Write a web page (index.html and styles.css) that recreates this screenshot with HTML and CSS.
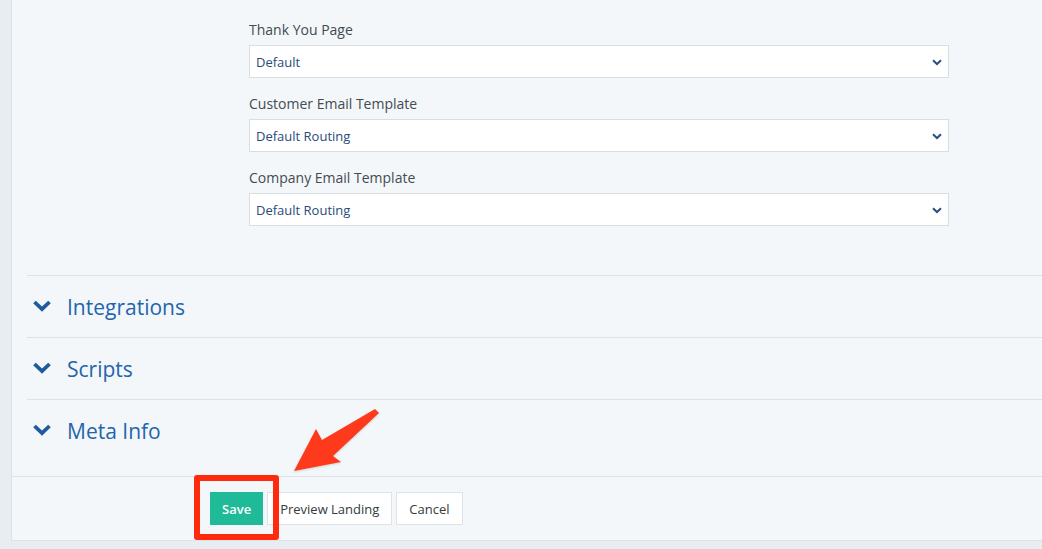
FILE: index.html
```html
<!DOCTYPE html>
<html lang="en">
<head>
  <meta charset="UTF-8">
  <meta name="viewport" content="width=device-width, initial-scale=1.0">
  <link rel="stylesheet" href="styles.css">
  <title>Landing Settings</title>
</head>
<body>
  <div class="panel">
    <div class="form-fields">
      <label class="field-label">Thank You Page</label>
      <div class="select-box">
        <span>Default</span>
        <svg class="select-caret" viewBox="0 0 10 7" width="10" height="7"><path d="M1 1.2 L5 5 L9 1.2" fill="none" stroke="#2c4f7c" stroke-width="2"/></svg>
      </div>

      <label class="field-label">Customer Email Template</label>
      <div class="select-box">
        <span>Default Routing</span>
        <svg class="select-caret" viewBox="0 0 10 7" width="10" height="7"><path d="M1 1.2 L5 5 L9 1.2" fill="none" stroke="#2c4f7c" stroke-width="2"/></svg>
      </div>

      <label class="field-label">Company Email Template</label>
      <div class="select-box">
        <span>Default Routing</span>
        <svg class="select-caret" viewBox="0 0 10 7" width="10" height="7"><path d="M1 1.2 L5 5 L9 1.2" fill="none" stroke="#2c4f7c" stroke-width="2"/></svg>
      </div>
    </div>

    <div class="sections">
      <div class="section-row">
        <svg class="section-chevron" viewBox="0 0 18 12" width="18" height="12"><path d="M1.5 2 L9 9.2 L16.5 2" fill="none" stroke="#1e5c9e" stroke-width="3.8"/></svg>
        <span>Integrations</span>
      </div>
      <div class="section-row">
        <svg class="section-chevron" viewBox="0 0 18 12" width="18" height="12"><path d="M1.5 2 L9 9.2 L16.5 2" fill="none" stroke="#1e5c9e" stroke-width="3.8"/></svg>
        <span>Scripts</span>
      </div>
      <div class="section-row">
        <svg class="section-chevron" viewBox="0 0 18 12" width="18" height="12"><path d="M1.5 2 L9 9.2 L16.5 2" fill="none" stroke="#1e5c9e" stroke-width="3.8"/></svg>
        <span>Meta Info</span>
      </div>
    </div>

    <div class="form-actions">
      <button class="btn btn-save">Save</button>
      <button class="btn">Preview Landing</button>
      <button class="btn">Cancel</button>
    </div>
  </div>

  <!-- annotation drawn over the screenshot -->
  <div class="highlight-box"></div>
  <svg class="pointer-arrow" width="1042" height="549" viewBox="0 0 1042 549">
    <polygon points="375,409 379,413 333,456 341,462 294,471 316,429 322,440" fill="#ff3a1c"/>
  </svg>
</body>
</html>
```

FILE: styles.css
```css
body {
  margin: 0;
  background-color: #e8edf2;
  font-family: 'Open Sans', 'Noto Sans', sans-serif;
  height: 549px;
  overflow: hidden;
  position: relative;
}

.panel {
  margin-left: 11px;
  height: 540px;
  background-color: #f3f7fa;
  border-left: 1px solid #dce2e8;
  border-bottom: 1px solid #dce2e8;
  display: flex;
  flex-direction: column;
}

.form-fields {
  display: flex;
  flex-direction: column;
  width: 700px;
  margin-left: 237px;
  padding-top: 20px;
  height: 275px;
  box-sizing: border-box;
  flex-shrink: 0;
}

.field-label {
  font-size: 14px;
  line-height: 20px;
  color: #444b52;
  margin-bottom: 5px;
}

.select-box {
  display: flex;
  align-items: center;
  justify-content: space-between;
  height: 33px;
  box-sizing: border-box;
  padding: 0 6px 0 6px;
  background-color: #ffffff;
  border: 1px solid #d9dee3;
  font-size: 13px;
  color: #2a4b78;
  margin-bottom: 16px;
}

.select-caret {
  margin-top: 1px;
}

.sections {
  margin-left: 15px;
  padding-bottom: 15px;
  flex-shrink: 0;
}

.section-row {
  display: flex;
  align-items: center;
  height: 61px;
  border-top: 1px solid #dce2e8;
  font-size: 21px;
  color: #2365ab;
}

.section-chevron {
  margin-left: 6px;
  margin-right: 16px;
  margin-top: -2px;
}

.form-actions {
  border-top: 1px solid #dce2e8;
  flex: 1;
  display: flex;
  align-items: flex-start;
  gap: 4px;
  padding-top: 15px;
  padding-left: 198px;
}

.btn {
  height: 33px;
  padding: 0 12px;
  background-color: #ffffff;
  border: 1px solid #dfe3e7;
  border-radius: 0;
  font-family: inherit;
  font-size: 13px;
  color: #333a40;
}

.btn-save {
  background-color: #1fba98;
  border-color: #1fba98;
  color: #ffffff;
  font-weight: 600;
  padding: 0 11px;
}

.highlight-box {
  position: absolute;
  left: 194px;
  top: 475px;
  width: 85px;
  height: 65px;
  box-sizing: border-box;
  border: 6px solid #ff2a0d;
  border-radius: 3px;
}

.pointer-arrow {
  position: absolute;
  left: 0;
  top: 0;
  pointer-events: none;
  filter: drop-shadow(0 1px 1px rgba(0, 0, 0, 0.15));
}
```
